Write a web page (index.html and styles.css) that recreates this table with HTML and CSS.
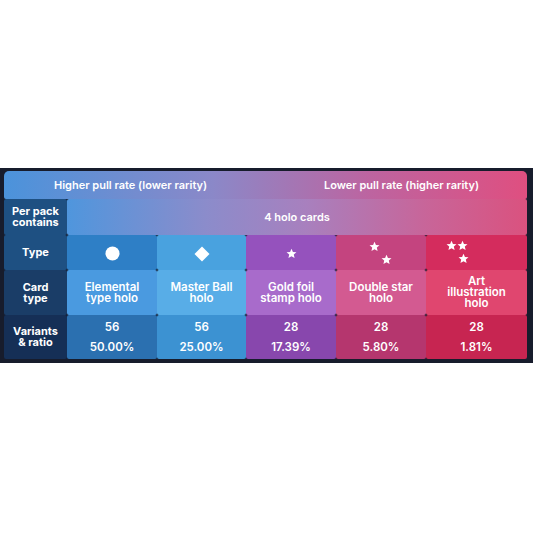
FILE: index.html
```html
<!DOCTYPE html>
<html lang="en">
<head>
  <meta charset="UTF-8">
  <title>Holo pull rates</title>
  <link rel="stylesheet" href="styles.css">
</head>
<body>

<div class="chart">
  <div class="rarity-bar">
    <span>Higher pull rate (lower rarity)</span>
    <span>Lower pull rate (higher rarity)</span>
  </div>

  <div class="label">Per pack<br>contains</div>
  <div class="pack">4 holo cards</div>

  <div class="label">Type</div>
  <div class="cell c1 type">
    <svg width="15" height="15" viewBox="0 0 16 16"><circle cx="8" cy="8" r="7.5" fill="#fff"/></svg>
  </div>
  <div class="cell c2 type">
    <svg width="16" height="16" viewBox="0 0 16 16"><path d="M8 0.5 15.5 8 8 15.5 0.5 8z" fill="#fff"/></svg>
  </div>
  <div class="cell c3 type">
    <svg width="11" height="11" viewBox="0 0 24 24"><path class="star" d="M12 1.5l3.1 7.1 7.7.7-5.8 5.1 1.7 7.6L12 18l-6.7 4 1.7-7.6-5.8-5.1 7.7-.7z"/></svg>
  </div>
  <div class="cell c4 type">
    <svg width="24" height="26" viewBox="0 0 24 26">
      <path class="star" transform="translate(0 0) scale(0.46)" d="M12 1.5l3.1 7.1 7.7.7-5.8 5.1 1.7 7.6L12 18l-6.7 4 1.7-7.6-5.8-5.1 7.7-.7z"/>
      <path class="star" transform="translate(12 13) scale(0.46)" d="M12 1.5l3.1 7.1 7.7.7-5.8 5.1 1.7 7.6L12 18l-6.7 4 1.7-7.6-5.8-5.1 7.7-.7z"/>
    </svg>
  </div>
  <div class="cell c5 type">
    <svg class="shift" width="23" height="25" viewBox="0 0 23 25">
      <path class="star" transform="translate(0 0) scale(0.46)" d="M12 1.5l3.1 7.1 7.7.7-5.8 5.1 1.7 7.6L12 18l-6.7 4 1.7-7.6-5.8-5.1 7.7-.7z"/>
      <path class="star" transform="translate(11 0) scale(0.46)" d="M12 1.5l3.1 7.1 7.7.7-5.8 5.1 1.7 7.6L12 18l-6.7 4 1.7-7.6-5.8-5.1 7.7-.7z"/>
      <path class="star" transform="translate(12 13) scale(0.46)" d="M12 1.5l3.1 7.1 7.7.7-5.8 5.1 1.7 7.6L12 18l-6.7 4 1.7-7.6-5.8-5.1 7.7-.7z"/>
    </svg>
  </div>

  <div class="label dark">Card<br>type</div>
  <div class="cell c1 name">Elemental<br>type holo</div>
  <div class="cell c2 name">Master Ball<br>holo</div>
  <div class="cell c3 name">Gold foil<br>stamp holo</div>
  <div class="cell c4 name">Double star<br>holo</div>
  <div class="cell c5 name">Art<br>illustration<br>holo</div>

  <div class="label darker">Variants<br>&amp; ratio</div>
  <div class="cell c1 ratio"><span>56</span><span>50.00%</span></div>
  <div class="cell c2 ratio"><span>56</span><span>25.00%</span></div>
  <div class="cell c3 ratio"><span>28</span><span>17.39%</span></div>
  <div class="cell c4 ratio"><span>28</span><span>5.80%</span></div>
  <div class="cell c5 ratio"><span>28</span><span>1.81%</span></div>
</div>

</body>
</html>
```

FILE: styles.css
```css
body { margin: 0; background: #fff; font-family: Inter, "Open Sans", sans-serif; color: #fff; }

.chart {
  margin-top: 168px;
  width: 533px;
  box-sizing: border-box;
  padding: 3px 6px 4px 4px;
  background: #171c2c;
  display: grid;
  grid-template-columns: 63px 90px 89px 90px 90px 101px;
  grid-template-rows: 28px 36px 35px 45px 44px;
  font-size: 11px;
  font-weight: 600;
}

.rarity-bar {
  grid-column: 1 / -1;
  display: flex;
  justify-content: space-between;
  align-items: center;
  padding: 0 48px 0 50px;
  border-radius: 5px 5px 2px 2px;
  background: linear-gradient(90deg, #4b93db 0%, #8b88c8 40%, #bd64a0 70%, #df4f80 100%);
}

.label {
  display: flex;
  align-items: center;
  justify-content: center;
  text-align: center;
  font-weight: 700;
  line-height: 11px;
  border-radius: 2px;
  background: #1e5082;
}
.label.dark { background: #1a3d67; }
.label.darker { background: #152f56; }

.pack {
  grid-column: 2 / -1;
  display: flex;
  align-items: center;
  justify-content: center;
  border-radius: 2px;
  background: linear-gradient(90deg, #4f96dd 0%, #8b8ccb 30%, #a880be 52%, #c86599 78%, #da527f 100%);
}

.cell {
  display: flex;
  align-items: center;
  justify-content: center;
  text-align: center;
  font-size: 11.5px;
  border-radius: 2px;
}

.type svg { display: block; margin-top: 2px; }
.type .shift { margin-left: -38px; margin-top: 0; }
.star { fill: #fff; }

.name { line-height: 11px; }

.ratio { flex-direction: column; gap: 6px; }

.c1.type { background: #2e7fc6; }
.c2.type { background: #49a2df; }
.c3.type { background: #9552bd; }
.c4.type { background: #c4447f; }
.c5.type { background: #d42c5d; }

.c1.name { background: #4a9ae0; }
.c2.name { background: #58ade7; }
.c3.name { background: #a86bcb; }
.c4.name { background: #d35a91; }
.c5.name { background: #e0466f; }

.c1.ratio { background: #2b70b0; }
.c2.ratio { background: #3c92d2; }
.c3.ratio { background: #8847ad; }
.c4.ratio { background: #b5366e; }
.c5.ratio { background: #c72551; }
```
